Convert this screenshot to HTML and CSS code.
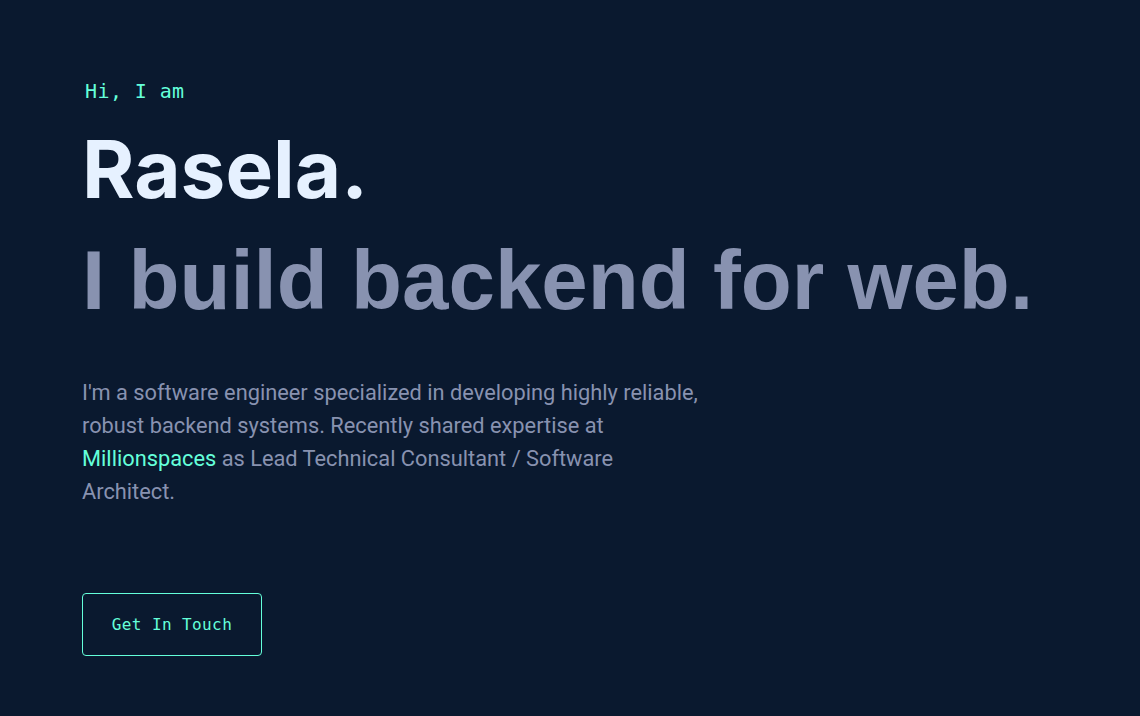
FILE: index.html
```html
<!DOCTYPE html>
<html lang="en">
<head>
<meta charset="utf-8">
<title>Rasela</title>
<link rel="stylesheet" href="styles.css">
</head>
<body>
<main class="hero">
  <h1 class="hero-intro">Hi, I am</h1>
  <h2 class="hero-name">Rasela.</h2>
  <h3 class="hero-tagline">I build backend for web.</h3>
  <p class="hero-text">I'm a software engineer specialized in developing highly reliable, robust backend systems. Recently shared expertise at <a class="hero-link" href="#">Millionspaces</a> as Lead Technical Consultant / Software Architect.</p>
  <a class="hero-button" href="#">Get In Touch</a>
</main>
</body>
</html>
```

FILE: styles.css
```css
html, body {
  margin: 0;
  padding: 0;
  background: #0a192f;
  height: 100%;
}

body {
  font-family: Roboto, "Liberation Sans", sans-serif;
  overflow: hidden;
}

.hero {
  display: flex;
  flex-direction: column;
  align-items: flex-start;
  padding: 79px 0 0 82px;
}

.hero-intro {
  margin: 0 0 26px 3px;
  font-family: "DejaVu Sans Mono", "Liberation Mono", monospace;
  font-weight: 400;
  font-size: 20px;
  line-height: 24px;
  letter-spacing: 0.4px;
  color: #64ffda;
}

.hero-name {
  margin: 0;
  font-family: Inter, "Liberation Sans", sans-serif;
  font-weight: 700;
  font-size: 80px;
  line-height: 80px;
  letter-spacing: 0;
  color: #e6f1ff;
}

.hero-tagline {
  margin: 29px 0 0;
  font-family: "Liberation Sans", Arial, sans-serif;
  font-weight: 700;
  font-size: 83.5px;
  line-height: 84px;
  color: #8892b0;
}

.hero-text {
  margin: 54px 0 0;
  max-width: 620px;
  font-size: 21.8px;
  line-height: 33px;
  color: #8892b0;
}

.hero-link {
  color: #64ffda;
  text-decoration: none;
}

.hero-button {
  margin-top: 85px;
  width: 178px;
  height: 61px;
  display: flex;
  align-items: center;
  justify-content: center;
  border: 1px solid #64ffda;
  border-radius: 4px;
  font-family: "DejaVu Sans Mono", "Liberation Mono", monospace;
  font-size: 16px;
  color: #64ffda;
  text-decoration: none;
  letter-spacing: 0.4px;
}
```
